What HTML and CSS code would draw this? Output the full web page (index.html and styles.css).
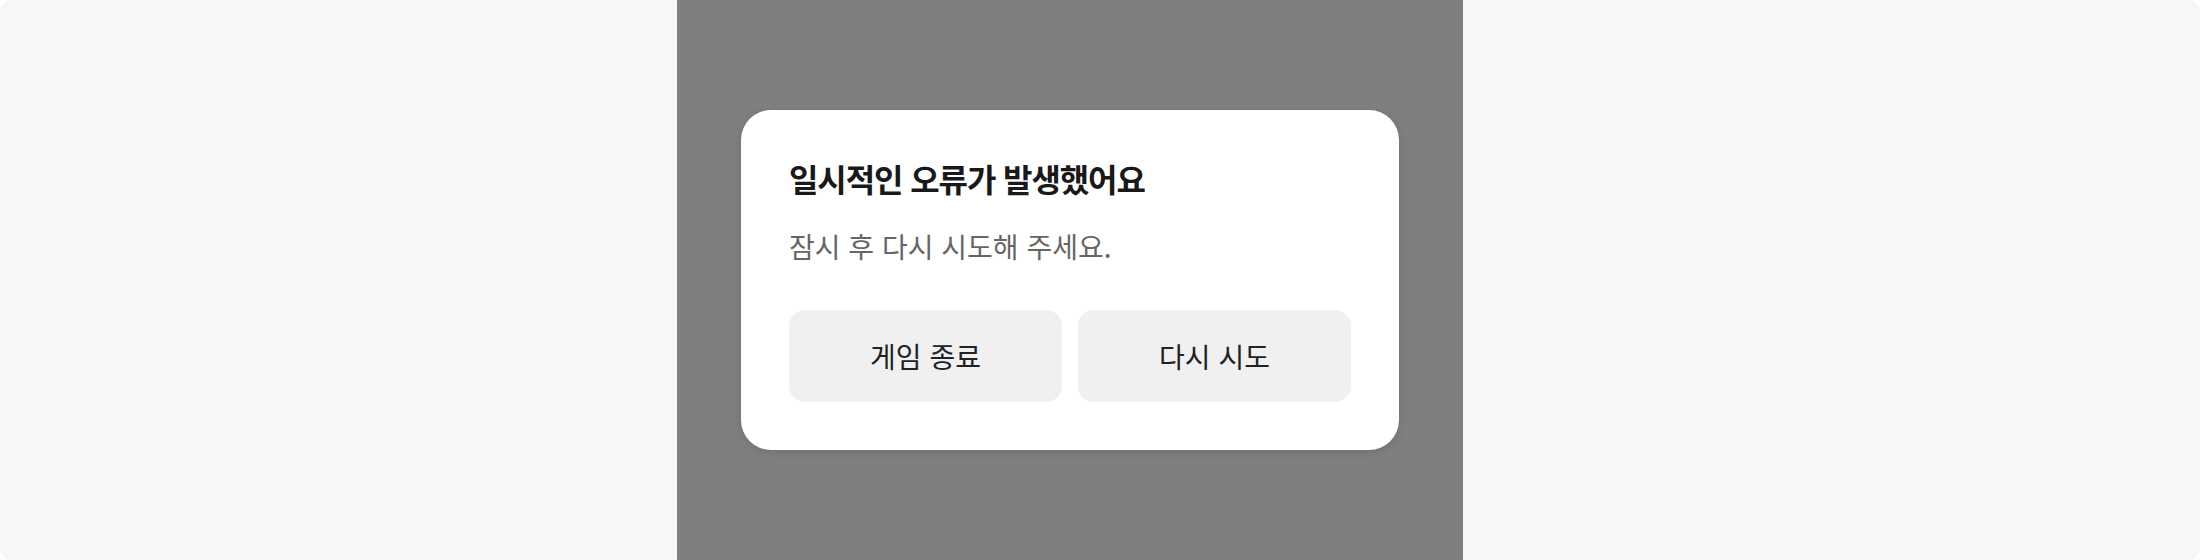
FILE: index.html
```html
<!DOCTYPE html>
<html lang="ko">
<head>
    <meta charset="UTF-8">
    <meta name="viewport" content="width=device-width, initial-scale=1.0">
    <title>오류 안내</title>
    <link rel="stylesheet" href="styles.css">
</head>
<body>
    <div class="stage">
        <div class="overlay">
            <div class="dialog" role="alertdialog" aria-labelledby="dialogTitle">
                <h2 id="dialogTitle" class="dialog-title">일시적인 오류가 발생했어요</h2>
                <p class="dialog-text">잠시 후 다시 시도해 주세요.</p>
                <div class="dialog-actions">
                    <button type="button" class="btn">게임 종료</button>
                    <button type="button" class="btn">다시 시도</button>
                </div>
            </div>
        </div>
    </div>
</body>
</html>
```

FILE: styles.css
```css
html, body {
    margin: 0;
    background: #ffffff;
}
body {
    font-family: "Noto Sans CJK KR", "Noto Sans", sans-serif;
}
.stage {
    width: 2200px;
    height: 560px;
    background-color: #f7f7f7;
    border-radius: 12px;
    display: flex;
    overflow: hidden;
}
.overlay {
    width: 786px;
    margin-left: 677px;
    background-color: #7f7f7f;
    display: flex;
    align-items: center;
    justify-content: center;
}
.dialog {
    width: 658px;
    box-sizing: border-box;
    padding: 48px 48px 48px;
    background-color: #ffffff;
    border-radius: 30px;
    box-shadow: 0 2px 8px rgba(0, 0, 0, 0.12);
}
.dialog-title {
    margin: 0;
    font-size: 32px;
    line-height: 40px;
    font-weight: 700;
    letter-spacing: -1.1px;
    color: #191919;
}
.dialog-text {
    margin: 30px 0 0;
    font-size: 28px;
    line-height: 36px;
    color: #666666;
}
.dialog-actions {
    display: flex;
    gap: 16px;
    margin-top: 46px;
}
.btn {
    flex: 1;
    height: 92px;
    border: none;
    border-radius: 16px;
    background-color: #f0f0f0;
    color: #222222;
    font-family: inherit;
    font-size: 28px;
    cursor: pointer;
}
```
